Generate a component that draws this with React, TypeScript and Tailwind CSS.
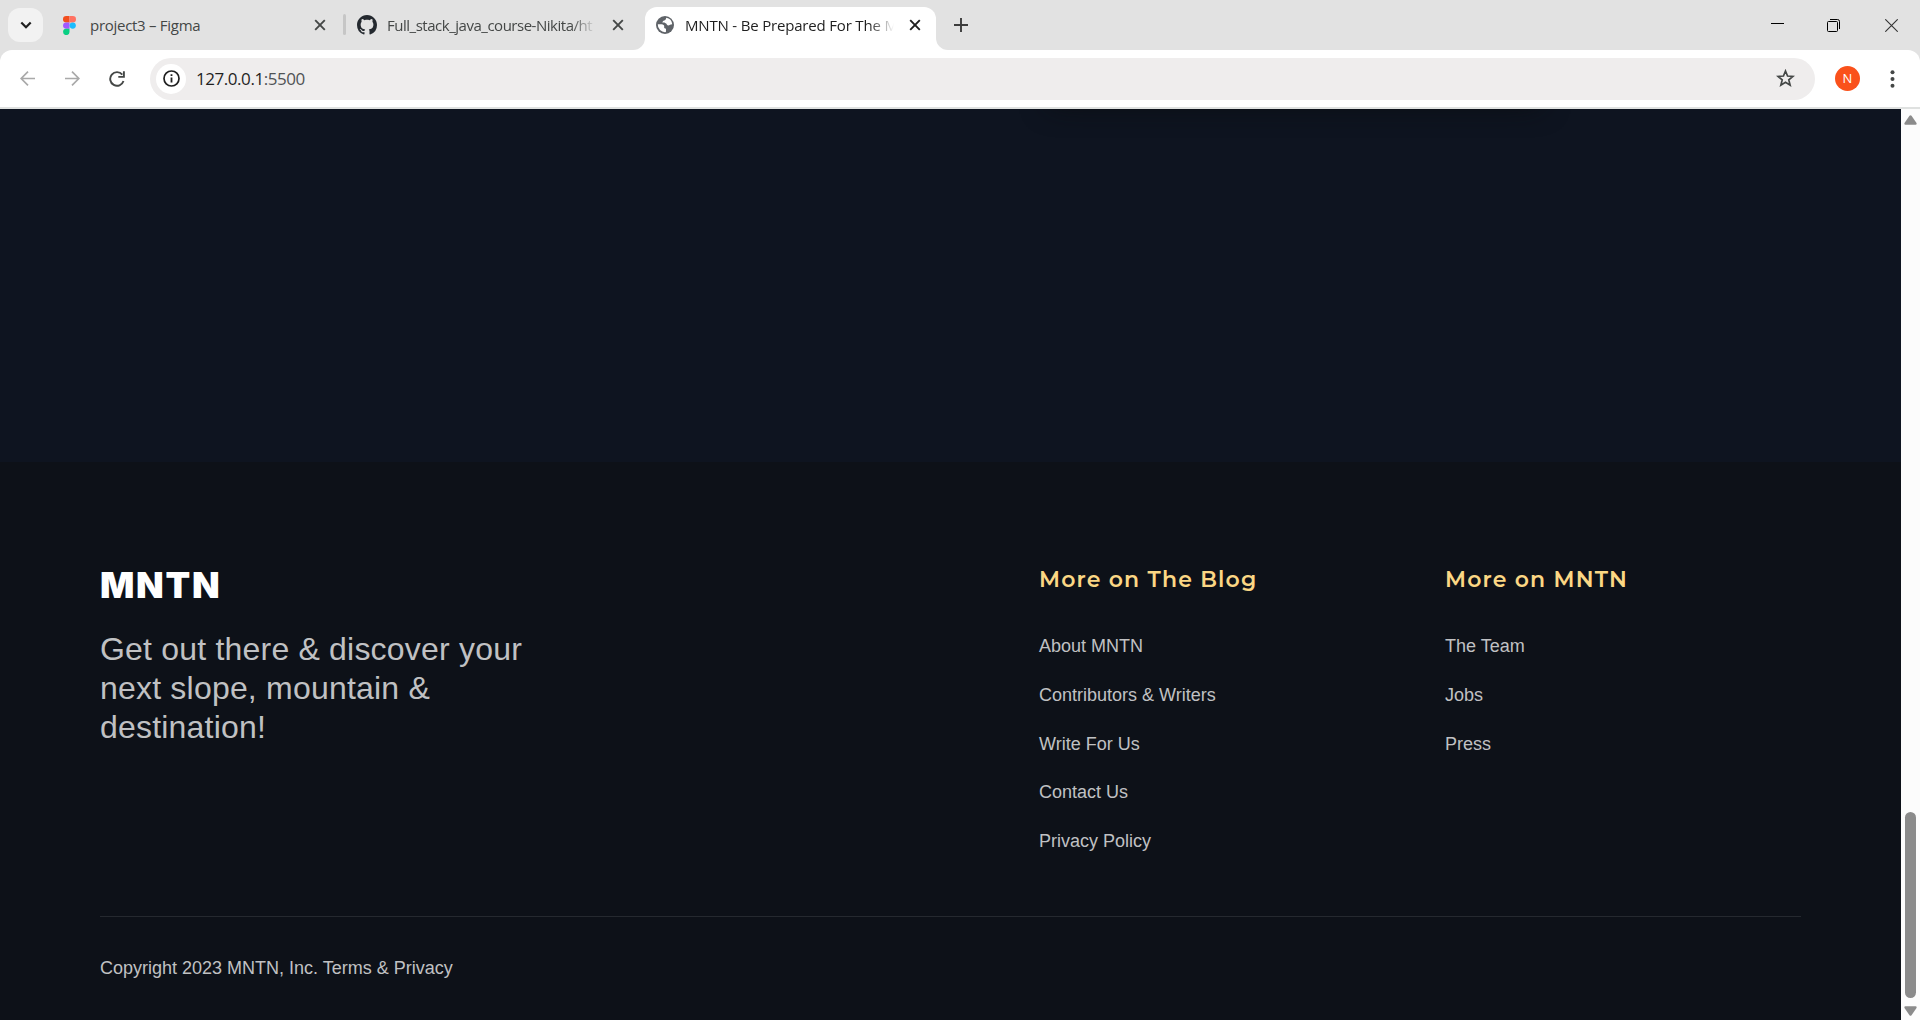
import React from "react";

const UI = "font-['Open_Sans','Noto_Sans',sans-serif]";

function Close({ className = "" }: { className?: string }) {
  return (
    <svg className={"h-3 w-3 shrink-0 " + className} viewBox="0 0 12 12" fill="none" stroke="currentColor" strokeWidth="1.9">
      <path d="M1.2 1.2l9.6 9.6M10.8 1.2l-9.6 9.6" />
    </svg>
  );
}

function TabStrip() {
  return (
    <div className="flex h-[50px] items-start bg-[#e2e2e2] text-[#444746]">
      <button className="ml-2 mt-2 flex h-[34px] w-[35px] shrink-0 items-center justify-center rounded-xl bg-[#f2f2f2]">
        <svg className="h-3 w-3" viewBox="0 0 12 12" fill="none" stroke="#1f1f1f" strokeWidth="2.2">
          <path d="M1.3 3.5L6 8.2l4.700-4.700" />
        </svg>
      </button>

      <div className="flex h-[50px] w-[300px] shrink-0 items-center pl-5">
        <svg className="h-[19px] w-[13px] shrink-0" viewBox="0 0 13 19">
          <path d="M3.200 0H6.500v6.400H3.200a3.200 3.200 0 010-6.400z" fill="#f24e1e" />
          <path d="M6.500 0h3.300a3.200 3.200 0 010 6.400H6.500z" fill="#ff7262" />
          <path d="M3.200 6.400h3.300v6.300H3.200a3.150 3.150 0 010-6.300z" fill="#a259ff" />
          <circle cx="9.700" cy="9.550" r="3.150" fill="#1abcfe" />
          <path d="M3.200 12.700h3.300v3.100a3.200 3.200 0 11-3.300-3.100z" fill="#0acf83" />
        </svg>
        <span className="ml-[14px] w-[224px] whitespace-nowrap text-[15px] leading-5 tracking-[-0.280px]">project3 – Figma</span>
        <Close />
      </div>

      <div className="mt-[14px] h-[21px] w-[3px] shrink-0 rounded-full bg-[#c6c6c6]" />

      <div className="flex h-[50px] w-[301px] shrink-0 items-center pl-[11px]">
        <svg className="h-5 w-5 shrink-0" viewBox="0 0 16 16" fill="#24292f">
          <path d="M8 0c4.420 0 8 3.580 8 8a8.013 8.013 0 0 1-5.450 7.590c-.4.080-.550-.170-.550-.380 0-.270.010-1.130.010-2.200 0-.750-.250-1.230-.540-1.480 1.780-.2 3.650-.880 3.650-3.950 0-.880-.310-1.590-.820-2.150.080-.2.360-1.020-.080-2.120 0 0-.670-.220-2.200.820-.640-.180-1.320-.270-2-.270-.680 0-1.360.090-2 .270-1.530-1.030-2.200-.820-2.200-.820-.440 1.100-.160 1.920-.080 2.120-.510.560-.820 1.280-.820 2.150 0 3.060 1.860 3.750 3.640 3.950-.230.200-.440.550-.510 1.070-.460.210-1.610.550-2.330-.660-.150-.240-.600-.830-1.230-.820-.670.010-.270.380.010.530.340.190.730.900.820 1.130.160.450.680 1.310 2.690.940 0 .670.010 1.300.010 1.490 0 .210-.150.450-.550.380A7.995 7.995 0 0 1 0 8c0-4.420 3.580-8 8-8Z" />
        </svg>
        <span className="ml-[10px] mr-4 w-[209px] whitespace-nowrap text-[15px] leading-5 tracking-[-0.480px] [mask-image:linear-gradient(to_right,black_88%,transparent)]">Full_stack_java_course-Nikita/ht</span>
        <Close />
      </div>

      <div className="relative -ml-[2px] mt-[7px] flex h-[43px] w-[291px] shrink-0 items-center rounded-t-xl bg-white pb-[7px] pl-[11px] text-[#1f1f1f]">
        <svg className="absolute bottom-0 -left-3 h-3 w-3" viewBox="0 0 12 12"><path d="M12 0v12H0A12 12 0 0012 0z" fill="#fff" /></svg>
        <svg className="absolute bottom-0 -right-3 h-3 w-3" viewBox="0 0 12 12"><path d="M0 0v12h12A12 12 0 010 0z" fill="#fff" /></svg>
        <svg className="h-[18px] w-[18px] shrink-0" viewBox="0 0 18 18">
          <circle cx="9" cy="9" r="9" fill="#5f6368" />
          <path d="M10.200 1.800C9.900 3.300 9.700 4.200 8.300 4.400 7 4.700 6.400 5.500 6.600 6.600 6.800 7.400 8.600 7.100 9.800 7.300 10.900 7.600 10.700 9.400 12 9.500 13.600 9.600 14.300 8.300 16.200 8.300A7.200 7.200 0 0010.200 1.800zM1.800 8.300H5.600C7.300 8.500 8.300 9.100 8.200 10.400 8.100 11.700 8.200 12.300 9.400 12.400 10.300 12.500 10 13.900 9.900 16.100A7.300 7.300 0 011.800 8.300z" fill="#fff" />
        </svg>
        <span className="ml-[11px] mr-[15px] w-[209px] whitespace-nowrap text-[15px] leading-5 tracking-[-0.180px] [mask-image:linear-gradient(to_right,black_88%,transparent)]">MNTN - Be Prepared For The M</span>
        <Close />
      </div>

      <svg className="ml-[18px] mt-[18px] h-[14px] w-[14px] shrink-0" viewBox="0 0 14 14" fill="none" stroke="#3c3c3c" strokeWidth="1.900"><path d="M7 0v14M0 7h14" /></svg>

      <div className="ml-auto flex h-[50px] items-center pr-[22px] text-black">
        <svg className="h-[13px] w-[13px]" viewBox="0 0 13 13"><path d="M0 5h13" stroke="currentColor" strokeWidth="1" transform="translate(0 -.5)" /></svg>
        <svg className="ml-[43px] h-[13px] w-[13px]" viewBox="0 0 13 13" fill="none" stroke="currentColor"><rect x=".5" y="2.500" width="10" height="10" rx="1" /><path d="M3 .5h7.500a2 2 0 012 2V10" /></svg>
        <svg className="ml-[45px] h-[13px] w-[13px]" viewBox="0 0 13 13" fill="none" stroke="#333" strokeWidth="1.100"><path d="M.3.3l12.400 12.400M12.700.3L.3 12.700" /></svg>
      </div>
    </div>
  );
}

function Toolbar() {
  return (
    <div className="bg-[#e2e2e2]">
      <div className="flex h-[59px] items-center rounded-t-xl border-b-2 border-[#dfe1e0] bg-white">
        <svg className="ml-5 h-[15px] w-[15px]" viewBox="0 0 15 15" fill="none" stroke="#a9a9a9" strokeWidth="1.700"><path d="M15 7.500H1.300M8 .7L1.200 7.500 8 14.300" /></svg>
        <svg className="ml-[30px] h-[15px] w-[15px]" viewBox="0 0 15 15" fill="none" stroke="#a9a9a9" strokeWidth="1.700"><path d="M0 7.500h13.700M7 .7l6.800 6.800L7 14.300" /></svg>
        <svg className="ml-[29px] h-4 w-4" viewBox="0 0 16 16" fill="none" stroke="#444746" strokeWidth="1.900"><path d="M13.300 3.700A6.800 6.800 0 1014.500 10" /><path d="M14.900.3v5.600H9.300" /></svg>
        <div className="ml-[25px] flex h-[42px] w-[1665px] items-center rounded-full bg-[#efeded] pl-[6px] pr-5">
          <div className="flex h-[30px] w-[30px] items-center justify-center rounded-full bg-white">
            <svg className="h-[17px] w-[17px]" viewBox="0 0 17 17"><circle cx="8.500" cy="8.500" r="7.500" fill="none" stroke="#1f1f1f" strokeWidth="1.700" /><path d="M7.600 7.600h1.800v5H7.600zM7.600 4.200h1.800V6H7.600z" fill="#1f1f1f" /></svg>
          </div>
          <span className="ml-[10px] pt-px text-[17px] leading-6 tracking-[-0.450px] text-[#1f1f1f]">127.0.0.1<span className="text-[#505355]">:5500</span></span>
          <svg className="ml-auto h-[19px] w-[19px]" viewBox="0 0 19 19" fill="none" stroke="#444746" strokeWidth="1.700"><path d="M9.500 2l2.050 5 5.400.4-4.150 3.500 1.350 5.300-4.650-2.850-4.650 2.850 1.350-5.300L2.050 7.400l5.400-.4z" /></svg>
        </div>
        <div className="ml-5 flex h-[25px] w-[25px] items-center justify-center rounded-full bg-[#fa511b] text-[13px] leading-none text-white">N</div>
        <svg className="ml-[30px] h-[18px] w-[5px]" viewBox="0 0 5 18" fill="#444746"><circle cx="2.500" cy="2.200" r="2" /><circle cx="2.500" cy="9" r="2" /><circle cx="2.500" cy="15.800" r="2" /></svg>
      </div>
    </div>
  );
}

function LinkColumn({ title, links, className }: { title: string; links: string[]; className: string }) {
  return (
    <div className={className}>
      <h3 className="whitespace-nowrap pt-[2px] font-['Montserrat','Inter',sans-serif] text-[22px] font-semibold leading-[27px] tracking-[1.150px] text-[#fbd784]">{title}</h3>
      <ul className="mt-[43px]">
        {links.map((l) => (
          <li key={l} className="h-[48.750px] text-[18px] leading-[21px]">{l}</li>
        ))}
      </ul>
    </div>
  );
}

function Scrollbar() {
  return (
    <div className="flex w-[19px] flex-col items-center bg-[#fcfcfc]">
      <svg className="mt-[6px] h-[10px] w-[13px]" viewBox="0 0 13 10" fill="#8b8b8b"><path d="M5.500.8q1-1.200 2 0l5 7.200q.6 1.700-1 1.700h-10q-1.600 0-1-1.700z" /></svg>
      <div className="mt-auto h-[186px] w-[11px] rounded-full bg-[#8b8b8b]" />
      <svg className="mb-1 mt-2 h-[10px] w-[13px]" viewBox="0 0 13 10" fill="#8b8b8b"><path d="M5.500 9.200q1 1.200 2 0l5-7.200q.6-1.700-1-1.700h-10q-1.600 0-1 1.700z" /></svg>
    </div>
  );
}

export default function App() {
  return (
    <div className="flex h-[1020px] w-[1920px] flex-col overflow-hidden">
      <div className={UI}>
        <TabStrip />
        <Toolbar />
      </div>
      <div className="flex flex-1">
        <main className="flex w-[1901px] flex-col font-['Liberation_Sans',Arial,sans-serif] text-[#c0c1c3]">
          <section className="relative h-[353px] overflow-hidden bg-[#0e1420]">
            <div className="absolute -top-[40px] left-[1050px] h-[36px] w-[490px] shadow-[0_0_28px_rgba(11,13,16,0.9)]" />
          </section>
          <footer className="flex flex-1 flex-col bg-[#0d1118] px-[100px]">
            <div className="flex h-[454px] pt-[102px]">
              <div className="w-[939px]">
                <div className="-mt-px font-['Arial_Black','Inter',sans-serif] text-[36px] font-black leading-[44px] tracking-[1.700px] text-white">MNTN</div>
                <p className="mt-[23px] w-[450px] text-[32px] leading-[39px] tracking-[0.200px]">Get out there &amp; discover your next slope, mountain &amp; destination!</p>
              </div>
              <LinkColumn className="w-[406px]" title="More on The Blog" links={["About MNTN", "Contributors & Writers", "Write For Us", "Contact Us", "Privacy Policy"]} />
              <LinkColumn className="w-[256px]" title="More on MNTN" links={["The Team", "Jobs", "Press"]} />
            </div>
            <div className="border-t border-[#25292f] pt-[41px] text-[18px] leading-[21px]">Copyright 2023 MNTN, Inc. Terms &amp; Privacy</div>
          </footer>
        </main>
        <Scrollbar />
      </div>
    </div>
  );
}
